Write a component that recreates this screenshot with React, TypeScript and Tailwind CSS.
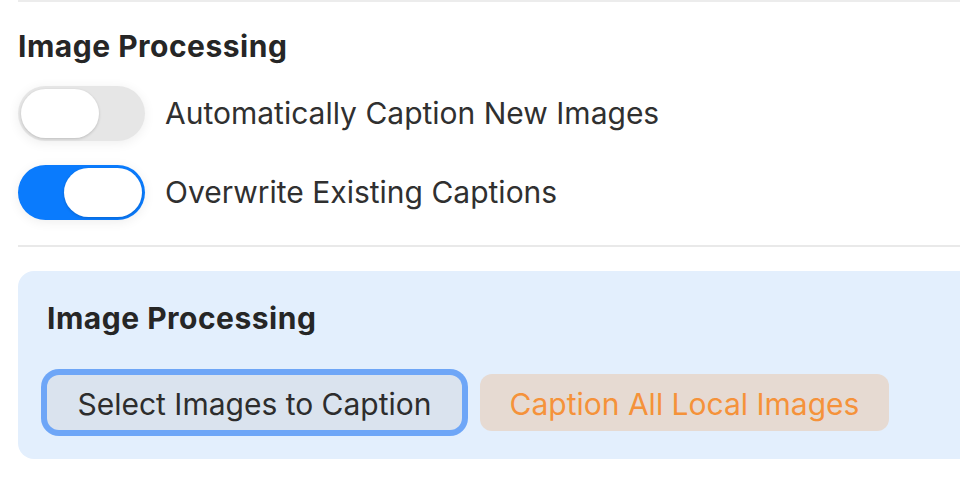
import React, { useState } from 'react';

interface ToggleProps {
    on: boolean;
    onChange: (v: boolean) => void;
}

const Toggle: React.FC<ToggleProps> = ({ on, onChange }) => {
    return (
        <button
            type="button"
            onClick={() => onChange(!on)}
            className={`relative flex h-[55px] w-[127px] shrink-0 items-center rounded-full p-[3px] shadow-[0_2px_12px_rgba(0,0,0,0.07)] ${on ? 'justify-end bg-[#0a7bfd]' : 'justify-start bg-[#e6e6e6]'}`}
        >
            <span className="block h-[49px] w-[78px] rounded-full bg-white shadow-[0_1px_3px_rgba(0,0,0,0.18)]" />
        </button>
    );
};

const App: React.FC = () => {
    const [autoCaption, setAutoCaption] = useState(false);
    const [overwrite, setOverwrite] = useState(true);

    return (
        <div className="h-[488px] w-[960px] overflow-hidden bg-white pl-[18px] font-['Inter',sans-serif] text-[#303030]">
            <div className="border-t-2 border-[#ececec]" />

            {/* Settings */}
            <h2 className="mt-[25px] text-[30px] font-bold leading-[38px] tracking-[0.5px] text-[#262626]">Image Processing</h2>
            <div className="mt-[21px] flex flex-col gap-[24px]">
                <div className="flex items-center gap-[20px]">
                    <Toggle on={autoCaption} onChange={setAutoCaption} />
                    <span className="text-[30px]">Automatically Caption New Images</span>
                </div>
                <div className="flex items-center gap-[20px]">
                    <Toggle on={overwrite} onChange={setOverwrite} />
                    <span className="text-[30px]">Overwrite Existing Captions</span>
                </div>
            </div>

            <div className="mt-[25px] border-t-2 border-[#e9e9e9]" />

            {/* Actions panel */}
            <div className="mt-[24px] h-[188px] w-[1000px] rounded-[16px] bg-[#e3effd] pl-[29px] pt-[28px]">
                <h3 className="text-[30px] font-bold leading-[38px] tracking-[0.5px] text-[#262626]">Image Processing</h3>
                <div className="mt-[37px] flex items-center gap-[18px]">
                    <button
                        type="button"
                        className="h-[55px] w-[415px] rounded-[12px] bg-[#dae3ee] pt-[3px] text-[30px] text-[#2d2d2d] ring-[6px] ring-[#6ea6f7]"
                    >
                        Select Images to Caption
                    </button>
                    <button
                        type="button"
                        className="h-[57px] w-[409px] rounded-[12px] bg-[#e6dad2] pt-[3px] text-[30px] text-[#f5923a]"
                    >
                        Caption All Local Images
                    </button>
                </div>
            </div>
        </div>
    );
};

export default App;
